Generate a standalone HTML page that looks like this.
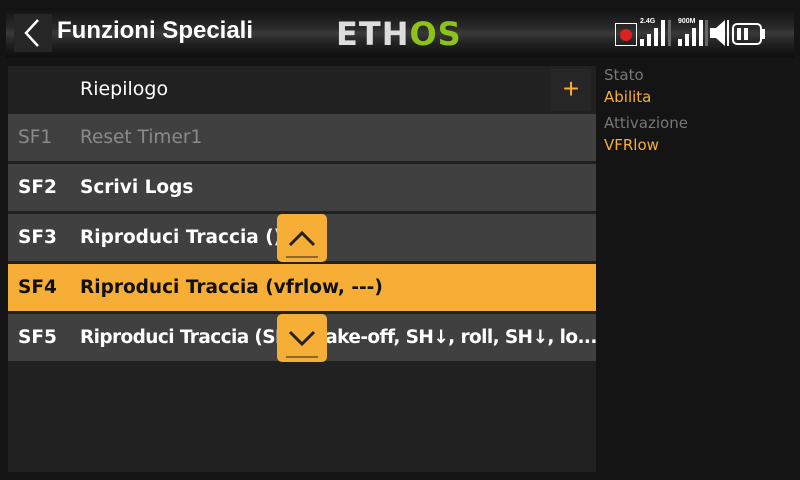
<!DOCTYPE html><html><head><style>
body{margin:0;width:800px;height:480px;background:#141414;position:relative;overflow:hidden;font-family:"Liberation Sans","DejaVu Sans",sans-serif}
.hdr{position:absolute;left:6px;top:8px;width:788px;height:50px;background:linear-gradient(#111 0%,#2a2a2a 40%,#3a3a3a 50%,#222 70%,#0d0d0d 100%)}
.back{position:absolute;left:14px;top:14px;width:38px;height:38px;background:#262626}
.title{position:absolute;left:57px;top:17px;color:#fff;font-size:24px;font-weight:bold;letter-spacing:0}
.logo{position:absolute;left:336px;top:15px;font-size:32px;font-weight:bold;letter-spacing:1px;color:#ddd;font-family:"DejaVu Sans",sans-serif}
.list{position:absolute;left:8px;top:66px;width:588px;height:406px;background:#212121}
.row{position:absolute;left:0;width:588px;height:47px;background:#404040;color:#fff;font-size:18.5px;font-weight:bold;font-family:"DejaVu Sans",sans-serif;white-space:nowrap;overflow:hidden}
.row span{position:absolute;top:13px}
.row .n{left:10px}.row .t{left:72px}
.arr{position:absolute;left:277px;width:50px;height:48px;background:#f7ae37;border-radius:5px}
.r{position:absolute;left:604px;font-size:15px;font-family:"DejaVu Sans",sans-serif}
</style></head><body>
<div class="hdr"></div>
<div class="back"><svg width="38" height="38"><path d="M24 6 L12 19 L24 32" stroke="#fff" stroke-width="2.5" fill="none"/></svg></div>
<div class="title">Funzioni Speciali</div>
<div class="logo">ETH<span style="color:#8cc21a">OS</span></div>
<svg style="position:absolute;left:600px;top:14px" width="190" height="34">
<rect x="15.5" y="9.5" width="21" height="22" fill="none" stroke="#fff"/><circle cx="26" cy="21" r="6" fill="#e02020"/>
<text x="40" y="9" fill="#fff" font-size="7" font-family="Liberation Sans" font-weight="bold">2.4G</text>
<rect x="40" y="25" width="4" height="7" fill="#fff"/><rect x="47" y="20" width="4" height="12" fill="#fff"/><rect x="54" y="14" width="4" height="18" fill="#fff"/><rect x="61" y="6" width="4" height="26" fill="#fff"/>
<rect x="68" y="6" width="3" height="26" fill="#666"/>
<text x="78" y="9" fill="#fff" font-size="7" font-family="Liberation Sans" font-weight="bold">900M</text>
<rect x="78" y="25" width="4" height="7" fill="#fff"/><rect x="85" y="20" width="4" height="12" fill="#fff"/><rect x="92" y="14" width="4" height="18" fill="#fff"/><rect x="99" y="6" width="4" height="26" fill="#fff"/>
<rect x="105" y="6" width="3" height="26" fill="#666"/>
<path d="M110 14 h6 l9 -8 v26 l-9 -8 h-6z" fill="#fff"/><rect x="127" y="6" width="2" height="26" fill="#fff"/>
<rect x="133" y="10" width="28" height="20" rx="4" fill="none" stroke="#fff" stroke-width="2"/><rect x="162" y="15" width="3" height="10" fill="#fff"/>
<rect x="137" y="14" width="4" height="12" fill="#fff"/><rect x="144" y="14" width="4" height="12" fill="#fff"/>
</svg>
<div class="list">
<div style="position:absolute;left:72px;top:12px;color:#fff;font-size:19px;font-family:'DejaVu Sans',sans-serif">Riepilogo</div>
<div style="position:absolute;left:543px;top:3px;width:40px;height:42px;background:#262626;color:#f7ae37;font-size:28px;text-align:center;line-height:40px">+</div>
<div class="row" style="top:48px;color:#8a8a8a;font-weight:normal"><span class="n">SF1</span><span class="t">Reset Timer1</span></div>
<div class="row" style="top:98px"><span class="n">SF2</span><span class="t">Scrivi Logs</span></div>
<div class="row" style="top:148px"><span class="n">SF3</span><span class="t">Riproduci Traccia ()</span></div>
<div class="row" style="top:198px;background:#f7ae37;color:#111"><span class="n">SF4</span><span class="t">Riproduci Traccia (vfrlow, ---)</span></div>
<div class="row" style="top:248px"><span class="n">SF5</span><span class="t" style="letter-spacing:-0.6px">Riproduci Traccia (SH↑, take-off, SH↓, roll, SH↓, lo...</span></div>
</div>
<div class="arr" style="top:214px"><svg width="50" height="48"><path d="M13 31 L25 19 L37 31" stroke="#222" stroke-width="3" fill="none"/><path d="M9 43h32" stroke="#222"/></svg></div>
<div class="arr" style="top:314px"><svg width="50" height="48"><path d="M13 18 L25 30 L37 18" stroke="#222" stroke-width="3" fill="none"/><path d="M9 43h32" stroke="#222"/></svg></div>
<div class="r" style="top:66px;color:#777">Stato</div>
<div class="r" style="top:88px;color:#f7ae37">Abilita</div>
<div class="r" style="top:114px;color:#777">Attivazione</div>
<div class="r" style="top:136px;color:#f7ae37">VFRlow</div>
</body></html>
